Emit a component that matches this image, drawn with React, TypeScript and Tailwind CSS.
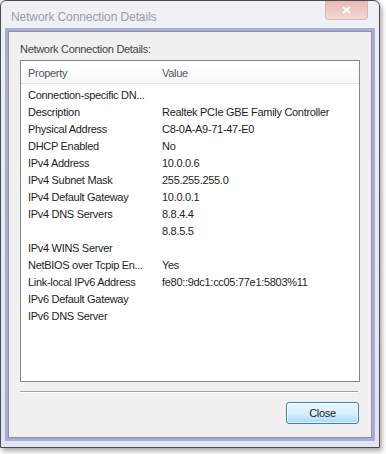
const rows: [string, string][] = [
  ["Connection-specific DN...", ""],
  ["Description", "Realtek PCIe GBE Family Controller"],
  ["Physical Address", "C8-0A-A9-71-47-E0"],
  ["DHCP Enabled", "No"],
  ["IPv4 Address", "10.0.0.6"],
  ["IPv4 Subnet Mask", "255.255.255.0"],
  ["IPv4 Default Gateway", "10.0.0.1"],
  ["IPv4 DNS Servers", "8.8.4.4"],
  ["", "8.8.5.5"],
  ["IPv4 WINS Server", ""],
  ["NetBIOS over Tcpip En...", "Yes"],
  ["Link-local IPv6 Address", "fe80::9dc1:cc05:77e1:5803%11"],
  ["IPv6 Default Gateway", ""],
  ["IPv6 DNS Server", ""],
];

export default function App() {
  return (
    <div className="h-[454px] w-[386px] bg-white font-['Liberation_Sans',Arial,sans-serif] text-[11px] tracking-[-0.3px] text-[#1e1e1e]">
      {/* window frame */}
      <div className="flex h-[448px] w-[380px] flex-col rounded-t-[6px] border border-[#4a4a52] bg-gradient-to-b from-[#eef1f5] to-[#e1e5ee] shadow-[2px_3px_5px_rgba(0,0,0,0.35)]">
        <div className="flex h-[27px] items-start justify-between pl-[10px] pr-[11px]">
          <span className="mt-[7px] text-[12px] tracking-[-0.1px] text-[#9a9ea6]">Network Connection Details</span>
          <div className="flex h-[19px] w-[43px] items-center justify-center rounded-b-[4px] border border-t-0 border-[#d8b8b6] bg-gradient-to-b from-[#e9b8b2] to-[#f3d9d5]">
            <svg width="9" height="8" viewBox="0 0 9 8">
              <path d="M1 1 L8 7 M8 1 L1 7" stroke="#fff" strokeWidth="2" />
            </svg>
          </div>
        </div>

        <div className="mx-[4px] mb-[6px] flex flex-1 flex-col border-[3px] border-[#a9abdc]">
          {/* client area */}
          <div className="flex flex-1 flex-col border border-[#8f93a0] bg-[#f0f0f0] px-[11px]">
            <div className="mt-[10px] h-[15px] leading-[15px] text-[#444]">Network Connection Details:</div>

            <div className="mt-[3px] flex h-[322px] w-[340px] flex-col border border-[#828790] bg-white">
              <div className="flex h-[23px] items-center border-b border-[#e5e5e5] bg-gradient-to-b from-white to-[#f7f8f9] pt-[3px] text-[#4d5563]">
                <span className="w-[141px] pl-[7px]">Property</span>
                <span>Value</span>
              </div>
              <div className="flex flex-col pt-[3px]">
                {rows.map(([k, v], i) => (
                  <div key={i} className="flex h-[17px] items-center">
                    <span className="w-[141px] whitespace-nowrap pl-[7px]">{k}</span>
                    <span className="whitespace-nowrap">{v}</span>
                  </div>
                ))}
              </div>
            </div>

            <div className="mt-[9px] h-[2px] w-[338px] border-t border-b border-t-[#a0a0a0] border-b-white" />

            <div className="mt-[9px] flex justify-end pr-[1px]">
              <button className="flex h-[22px] w-[73px] items-center justify-center rounded-[3px] border border-[#3c7fb1] bg-gradient-to-b from-[#eaf6fd] via-[#d9f0fc] to-[#a7d9f5] text-[#1e1e1e] shadow-[inset_0_0_0_1px_rgba(255,255,255,0.7)]">
                Close
              </button>
            </div>
          </div>
        </div>
      </div>
    </div>
  );
}
